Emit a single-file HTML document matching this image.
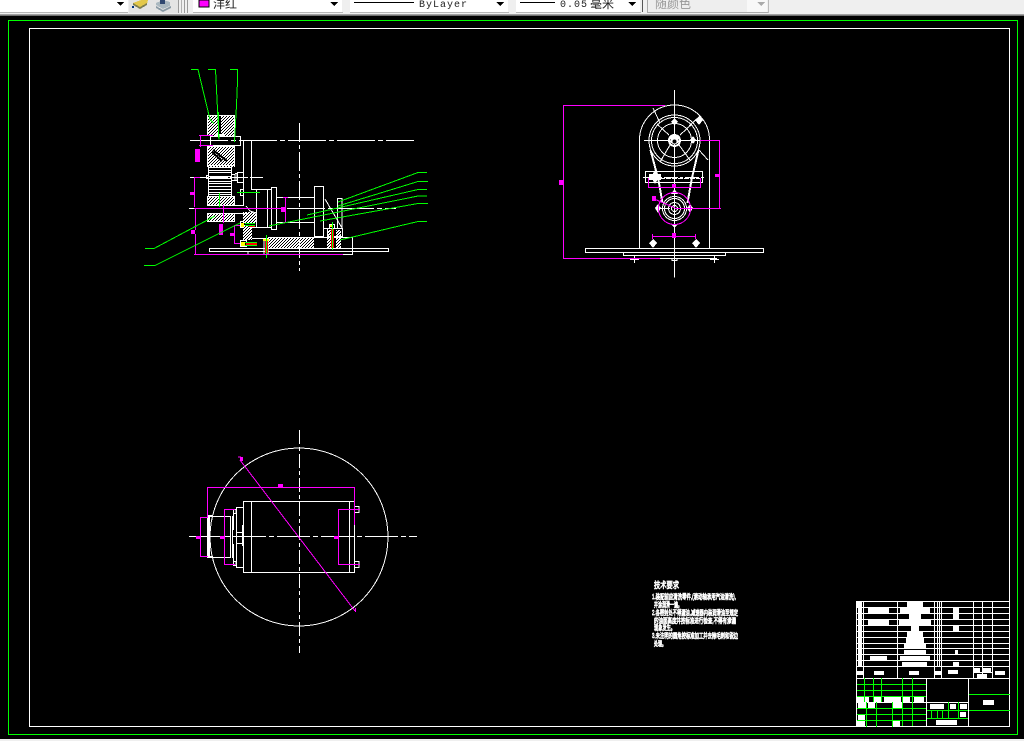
<!DOCTYPE html>
<html lang="zh"><head><meta charset="utf-8"><title>CAD</title>
<style>
html,body{margin:0;padding:0;width:1024px;height:741px;overflow:hidden;background:#000}
svg{position:absolute;left:0;top:0;display:block}
</style></head><body>
<svg width="1024" height="741" viewBox="0 0 1024 741" xmlns="http://www.w3.org/2000/svg" shape-rendering="crispEdges" font-family="'Liberation Sans','Noto Sans CJK SC',sans-serif">
<defs>
<pattern id="h" width="3" height="3" patternUnits="userSpaceOnUse"><rect width="3" height="3" fill="#fff"/><rect x="0" y="0" width="1" height="1" fill="#000"/><rect x="2" y="1" width="1" height="1" fill="#000"/><rect x="1" y="2" width="1" height="1" fill="#000"/></pattern>
</defs>
<rect width="1024" height="741" fill="#000"/>
<!-- toolbar -->
<rect width="1024" height="15" fill="#efefef"/>
<rect y="14" width="1024" height="1" fill="#a0a0a0"/><rect y="15" width="1024" height="1" fill="#707070"/>
<rect width="128" height="12" fill="#fff"/><rect x="0" y="12" width="128" height="1" fill="#b5b5b5"/>
<polygon points="117,2 124,2 120.5,6" fill="#000"/>
<rect x="129" y="0" width="50" height="13" fill="#e4e4e4"/>
<polygon points="133,3 141,0 148,0 147,4 140,8" fill="#e3c84a"/><polygon points="133,5 140,9 147,5 147,3 140,7 133,3" fill="#7d7d50"/><rect x="132" y="6" width="2" height="2" fill="#003080"/>
<polygon points="156,3 163,0 170,2 170,6 163,9 156,5" fill="#aab8c0"/><polygon points="156,6 163,10 171,6 171,8 163,12 156,8" fill="#8899a4"/><rect x="160" y="0" width="5" height="4" fill="#304870"/>
<rect x="178" y="0" width="1" height="13" fill="#9a9a9a"/><rect x="181" y="0" width="1" height="13" fill="#b0b0b0"/><rect x="184" y="0" width="1" height="13" fill="#9a9a9a"/><rect x="187" y="0" width="1" height="13" fill="#9a9a9a"/>
<rect x="193" y="0" width="149" height="12" fill="#fff"/><rect x="193" y="12" width="150" height="1" fill="#b5b5b5"/>
<rect x="199" y="0" width="10" height="7" fill="#ff00ff" stroke="#000" stroke-width="1"/>
<text x="213" y="8" font-size="12" fill="#222" shape-rendering="auto">洋红</text>
<polygon points="330,2 338,2 334,6" fill="#000"/>
<rect x="350" y="0" width="158" height="12" fill="#fff"/><rect x="350" y="12" width="159" height="1" fill="#b5b5b5"/>
<rect x="354" y="2" width="60" height="1" fill="#000"/>
<text x="419" y="7" font-size="10" letter-spacing="1" font-family="'Liberation Mono',monospace" fill="#222" shape-rendering="auto">ByLayer</text>
<polygon points="496,2 504,2 500,6" fill="#000"/>
<rect x="516" y="0" width="124" height="12" fill="#fff"/><rect x="516" y="12" width="125" height="1" fill="#b5b5b5"/>
<rect x="520" y="2" width="35" height="1" fill="#000"/>
<text x="560" y="7" font-size="10" letter-spacing="1" font-family="'Liberation Mono',monospace" fill="#222" shape-rendering="auto">0.05</text>
<text x="590" y="8" font-size="12" fill="#222" shape-rendering="auto">毫米</text>
<polygon points="628,2 636,2 632,6" fill="#000"/>
<rect x="642" y="0" width="1" height="12" fill="#555"/>
<rect x="647" y="0" width="110" height="12" fill="#eee"/><rect x="647" y="0" width="1" height="13" fill="#aaa"/><rect x="647" y="12" width="122" height="1" fill="#aaa"/><rect x="768" y="0" width="1" height="13" fill="#bbb"/><rect x="747" y="0" width="20" height="12" fill="#f8f8f8"/>
<text x="655" y="8" font-size="12" fill="#999" shape-rendering="auto">随颜色</text>
<polygon points="757,2 765,2 761,6" fill="#aaa"/>
<rect y="739" width="1024" height="2" fill="#efefef"/>
<!-- frames -->
<g fill="none" stroke-width="1">
<rect x="8.5" y="20.5" width="1009" height="714" stroke="#00ff00"/>
<rect x="29.5" y="28.5" width="980" height="698" stroke="#fff"/>
</g>

<!-- LEFT VIEW -->
<rect x="207" y="115" width="28" height="21" fill="#fff"/>
<rect x="207" y="146" width="28" height="21" fill="#fff"/>
<rect x="207" y="196" width="28" height="10" fill="#fff"/>
<rect x="207" y="213" width="28" height="9" fill="#fff"/>
<rect x="208" y="116" width="26" height="20" fill="url(#h)"/>
<rect x="208" y="147" width="26" height="20" fill="url(#h)"/>
<rect x="208" y="197" width="26" height="8" fill="url(#h)"/>
<rect x="208" y="214" width="26" height="7" fill="url(#h)"/>
<rect x="219" y="116" width="2" height="19" fill="#000"/>
<path d="M213 150l14 11M212 152l10 9" stroke="#000" stroke-width="2" fill="none"/>
<rect x="216" y="134" width="9" height="3" fill="#fff"/>
<rect x="243" y="212" width="13" height="11" fill="url(#h)"/>
<rect x="243" y="225" width="9" height="15" fill="url(#h)"/>
<rect x="268" y="238" width="32" height="10" fill="url(#h)"/>
<rect x="300" y="238" width="14" height="10" fill="url(#h)"/>
<rect x="327" y="230" width="6" height="18" fill="url(#h)"/>
<rect x="336" y="230" width="5" height="18" fill="url(#h)"/>
<g fill="none" stroke="#fff" stroke-width="1">
<path d="M190 140.500H414" stroke-dasharray="38 3 5 3"/>
<path d="M190 177.500H263" stroke-dasharray="18 2"/>
<path d="M189 208.500H396" stroke-dasharray="38 3 5 3"/>
<path d="M299.500 123V271" stroke-dasharray="19 3 4 3"/>
<rect x="208.500" y="165.500" width="23" height="31"/>
<path d="M208 167.500H232M208 170.500H232M208 172.500H232M208 176.500H232M208 178.500H232M208 181.500H232M208 183.500H232M208 186.500H232M208 189.500H232M208 192.500H232M208 194.500H232"/>
<rect x="206.500" y="175.500" width="2" height="3"/>
<path d="M232 174.500h3v6h-3M235 173.500h2v7h-2"/>
<rect x="237.500" y="172.500" width="6" height="10"/>
<rect x="210.500" y="136.500" width="30" height="9"/>
<path d="M243.500 141V206M251.500 141V189M251 189.500H271M256.500 190V227M267.500 190V227M248 227.500H271"/>
<rect x="240.500" y="189.500" width="3" height="6"/>
<path d="M217 205.500H244M224 213.500H247M246 206l4 5 6 2"/>
<rect x="240.500" y="221.500" width="3" height="6"/>
<rect x="240.500" y="240.500" width="6" height="6"/>
<rect x="271.500" y="187.500" width="5" height="42"/>
<path d="M277 197.500H314M277 222.500H314"/>
<rect x="314.500" y="186.500" width="9" height="50"/>
<path d="M324 228.500H343M337.500 198v30M337 198.500h5v30M325 199l17 29"/>
<rect x="329.500" y="224.500" width="5" height="4"/>
<rect x="327.500" y="228.500" width="15" height="8"/>
<path d="M252 238.500H268M268 237.500H352M352.500 237V254"/>
<rect x="209.500" y="248.500" width="179" height="3"/>
<path d="M343 254.500H353M248 252v3"/>
<path d="M264 240V254M268 240V254"/>
</g>
<rect x="263" y="239" width="6" height="2" fill="#ffff00"/>
<rect x="241" y="223" width="3" height="4" fill="#ffff00"/>
<rect x="241" y="242" width="4" height="4" fill="#ffff00"/>
<rect x="330" y="225" width="3" height="2" fill="#ffff00"/>
<g fill="none" stroke-width="1">
<path d="M245 223.500h10M245 225.500h10M245 242.500h12M245 245.500h12M266.500 235V258M332.500 222V250" stroke="#00ff00"/>
<path d="M249 226.500h6M246 243.500h11M246 244.500h11M265.500 241V253M267.500 241V253M331.500 229V248M333.500 229V248" stroke="#ff0000"/>
</g>
<!-- magenta left -->
<g fill="none" stroke="#ff00ff" stroke-width="1">
<path d="M199 135.500h14M200.500 135V147M199 145.500h14"/>
<path d="M194 177.500h6M194.500 178V207M195.500 208V230M195.500 234V254"/>
<path d="M194 254.500H343"/>
<path d="M194 208.500H286"/>
<path d="M285.500 197V222M283 197.500h5M283 222.500h5"/>
<path d="M223.500 205V223"/>
<path d="M234.500 225V243M234 225.500h6M234 243.500h6"/>
</g>
<g fill="#ff00ff">
<rect x="195" y="149" width="5" height="13"/>
<rect x="190" y="192" width="4" height="3"/>
<rect x="191" y="230" width="4" height="4"/>
<rect x="219" y="224" width="4" height="11"/>
<rect x="230" y="233" width="4" height="3"/>
<rect x="281" y="207" width="4" height="5"/>
</g>
<!-- green left -->
<g fill="none" stroke="#00ff00" stroke-width="1">
<path d="M191 69.500h7l12 50 4 4"/>
<path d="M208 69.500h7.500l1 20 2.500 50"/>
<path d="M230 69.500h7.500V81l-1 24-2 37"/>
<path d="M218.500 112V138"/>
<path d="M145 248.500h9L215 216"/>
<path d="M144 265.500h11L240 223"/>
<path d="M219.500 193V207"/>
<path d="M237 192.500H260"/>
<path d="M269 226L418 196h9"/>
<path d="M338 202L418 172.500h9"/>
<path d="M338 206L418 181.500h10"/>
<path d="M307 215L418 189.500h9"/>
<path d="M320 221L418 203.500h10"/>
<path d="M340 240L418 221.500h9"/>
</g>

<!-- RIGHT VIEW -->
<g fill="none" stroke="#fff" stroke-width="1">
<path d="M674.500 90V277.500"/>
<path d="M639.500 248V140A35 35 0 0 1 709.500 140V248"/>
<circle cx="674.500" cy="140.500" r="25.500"/>
<circle cx="674.500" cy="140.500" r="23"/>
<circle cx="674.500" cy="140.500" r="17"/>
<circle cx="674.500" cy="140.500" r="6"/>
<circle cx="674.500" cy="140.500" r="5"/>
<path d="M644 140.500h25M680 140.500h23"/>
<path d="M653 108l7 15M657 124l12 11M680 135l12-11M660 162l10-17M690 160l-11-15M699 150l9 10M689 126l11-10"/>
<path d="M650 150l8 30 4 23M651 150l8 30 4 23M699 150l-7 30-4 23M698 150l-7 30-4 23"/>
<rect x="645.500" y="171.500" width="57" height="11"/>
<path d="M648 178.500H702" stroke-dasharray="5 1"/>
<path d="M643 177.500H706" stroke-dasharray="14 2 3 2"/>
<circle cx="674.500" cy="208.500" r="12"/>
<circle cx="674.500" cy="208.500" r="10"/>
<circle cx="674.500" cy="208.500" r="6"/>
<circle cx="674.500" cy="208.500" r="3"/>
<path d="M658 208.500h12M679 208.500h12"/>
<rect x="585.500" y="248.500" width="178" height="4"/>
<path d="M623.500 253v2.500H725.500V253M634.500 256V263M714.500 256V263M630 259.500h9M710 259.500h9M672 258.500h5v2h-5zM660 258.500H717"/>
</g>
<g fill="#fff">
<polygon points="699,116 703,120 699,125 695,120"/>
<polygon points="674.500,118 678,122 674.500,125 671,122"/>
<polygon points="693,136 696,140 693,144 690,140"/>
<polygon points="674.500,134 678,136 679,142 674.500,145 670,142 671,136"/>
<polygon points="655,170 659,177 655,184 651,177"/>
<rect x="649" y="174" width="12" height="6"/>
<polygon points="674.500,189 678,194 671,194"/>
<polygon points="674.500,228 678,224 671,224"/>
<polygon points="658,204 661,208 658,213 655,208"/>
<polygon points="690,204 693,208 690,213 687,208"/>
<polygon points="653,239 657,243 653,248 649,243"/>
<polygon points="696,239 700,243 696,248 692,243"/>
</g>
<circle cx="674.500" cy="141.500" r="2" fill="#000"/>
<g fill="none" stroke="#ff00ff" stroke-width="1">
<path d="M563 105.500H665M563.500 105V258M563 258.500H660"/>
<path d="M700 140.500h20M719.500 141V208M675 208.500h46"/>
<path d="M648.500 178v10M700.500 178v10M648 187.500h53"/>
<circle cx="674.500" cy="208.500" r="16"/>
<path d="M652 198l23 10"/>
<path d="M652.500 234v5M695.500 234v5M652 236.500h44"/>
</g>
<g fill="#ff00ff">
<rect x="559" y="180" width="4" height="5"/>
<rect x="715" y="174" width="4" height="3"/>
<rect x="672" y="184" width="4" height="4"/>
<rect x="652" y="196" width="4" height="5"/>
<rect x="672" y="233" width="4" height="5"/>
</g>

<!-- BOTTOM VIEW -->
<g fill="none" stroke="#fff" stroke-width="1">
<circle cx="299" cy="537" r="89"/>
<path d="M299.500 430V653" stroke-dasharray="14 3 4 3"/>
<path d="M189 536.500H417" stroke-dasharray="33 3 5 3"/>
<rect x="243.500" y="501.500" width="111" height="71"/>
<path d="M251.500 502V572M349.500 502V572"/>
<path d="M355 506.500h4v6h-4M355 561.500h4v6h-4"/>
<path d="M236.500 507V567M236 507.500h7M236 567.500h7M236 532.500h7M236 543.500h7M233 509.500h3v4h-3M233 561.500h3v4h-3"/>
<path d="M233.500 509V530M233.500 544V564M242.500 525V546"/>
<rect x="208.500" y="516.500" width="22" height="41"/>
<path d="M232.500 516V558"/>
<rect x="207" y="516" width="3" height="42" fill="#fff" stroke="none"/>
<rect x="207" y="515" width="6" height="2" fill="#fff" stroke="none"/><rect x="207" y="556" width="6" height="2" fill="#fff" stroke="none"/>
</g>
<g fill="none" stroke="#ff00ff" stroke-width="1">
<path d="M207.500 487V517M207 487.500H355M354.500 487V525"/>
<path d="M240 460l115 151"/>
<path d="M200 517.500h8M200 556.500h8M200.500 517V557"/>
<path d="M224.500 509V564M224 509.500h11M224 564.500h11"/>
<path d="M338.500 509V564M338 509.500h22M338 564.500h22"/>
<path d="M238 457h3M355.500 608v4"/>
</g>
<g fill="#ff00ff">
<rect x="278" y="484" width="5" height="4"/>
<rect x="196" y="536" width="4" height="3"/>
<rect x="220" y="536" width="4" height="3"/>
<rect x="334" y="536" width="4" height="3"/>
<rect x="240" y="457" width="3" height="4"/>
</g>

<!-- TECH TEXT -->
<g fill="#fff" stroke="#fff" stroke-width=".7" shape-rendering="auto">
<text x="654" y="588" font-size="8.500" textLength="25" lengthAdjust="spacingAndGlyphs">技术要求</text>
<text x="652" y="599" font-size="7" textLength="84" lengthAdjust="spacingAndGlyphs">1.装配前应清洗零件,(滚动轴承用汽油清洗),</text>
<text x="654" y="607" font-size="7" textLength="28" lengthAdjust="spacingAndGlyphs">并涂润滑一遍。</text>
<text x="652" y="615" font-size="7" textLength="86" lengthAdjust="spacingAndGlyphs">2.各密封处不得漏油,减速器内装润滑油至规定</text>
<text x="654" y="623" font-size="7" textLength="82" lengthAdjust="spacingAndGlyphs">的油面高度并按标准进行检查,不得有渗漏</text>
<text x="654" y="630" font-size="7" textLength="21" lengthAdjust="spacingAndGlyphs">现象发生。</text>
<text x="652" y="638" font-size="7" textLength="86" lengthAdjust="spacingAndGlyphs">3.未注明的圆角按标准加工并去除毛刺和锐边</text>
<text x="654" y="646" font-size="7" textLength="12" lengthAdjust="spacingAndGlyphs">处理。</text>
</g>

<!-- TITLE TABLE -->
<g fill="none" stroke="#fff" stroke-width="1">
<path d="M856 601.500H1010M856 607.500H1010M856 613.500H1010M856 619.500H1010M856 625.500H1010M856 631.500H1010M856 637.500H1010M856 643.500H1010M856 648.500H1010M856 654.500H1010M856 660.500H1010M856 666.500H1010M856 678.500H1010"/>
<path d="M856.500 601V726M863.500 601V678M897.500 601V678M934.500 601V678M941.500 601V678M973.500 601V678M982.500 601V678M992.500 601V678"/>
<path d="M858.500 601V666M861.500 601V666M937.500 601V666M939.500 601V666M857 672.500h6M935 672.500h6M973 672.500h20"/>
<path d="M926.500 678V726M968.500 678V726M926 702.500H968M856 702.500H926"/>
</g>
<g fill="#fff">
<rect x="857" y="602" width="2" height="5"/><rect x="859" y="602" width="3" height="5"/><rect x="859" y="608" width="3" height="5"/><rect x="859" y="614" width="3" height="5"/><rect x="859" y="620" width="3" height="5"/><rect x="859" y="626" width="3" height="5"/><rect x="859" y="632" width="3" height="5"/><rect x="859" y="638" width="3" height="5"/><rect x="859" y="644" width="3" height="4"/><rect x="859" y="649" width="3" height="5"/><rect x="859" y="655" width="3" height="5"/><rect x="859" y="661" width="3" height="5"/>
<rect x="857" y="671" width="6" height="4"/>
<rect x="868" y="608" width="21" height="5"/><rect x="868" y="620" width="21" height="5"/><rect x="870" y="656" width="17" height="5"/><rect x="874" y="671" width="10" height="4"/>
<rect x="907" y="602" width="16" height="5"/><rect x="900" y="608" width="30" height="5"/><rect x="909" y="614" width="12" height="5"/><rect x="899" y="620" width="32" height="5"/><rect x="911" y="626" width="8" height="5"/><rect x="907" y="632" width="16" height="5"/><rect x="906" y="638" width="18" height="5"/><rect x="904" y="644" width="22" height="4"/><rect x="904" y="650" width="22" height="5"/><rect x="900" y="656" width="30" height="5"/><rect x="902" y="662" width="25" height="5"/><rect x="909" y="671" width="10" height="4"/>
<rect x="935" y="671" width="6" height="4"/>
<rect x="953" y="608" width="6" height="5"/><rect x="953" y="614" width="6" height="5"/><rect x="953" y="626" width="6" height="5"/><rect x="955" y="650" width="3" height="5"/><rect x="953" y="662" width="6" height="5"/><rect x="948" y="670" width="10" height="4"/>
<rect x="974" y="668" width="6" height="4"/><rect x="983" y="668" width="8" height="4"/><rect x="977" y="674" width="10" height="4"/><rect x="995" y="671" width="10" height="4"/>
<rect x="857" y="697" width="12" height="5"/><rect x="874" y="697" width="7" height="5"/><rect x="884" y="697" width="17" height="5"/><rect x="903" y="697" width="7" height="5"/><rect x="914" y="697" width="10" height="5"/>
<rect x="858" y="703" width="8" height="5"/><rect x="868" y="703" width="7" height="5"/><rect x="893" y="703" width="9" height="5"/>
<rect x="858" y="715" width="7" height="5"/><rect x="857" y="721" width="8" height="5"/><rect x="893" y="721" width="7" height="5"/>
<rect x="930" y="704" width="14" height="5"/><rect x="950" y="704" width="6" height="5"/><rect x="960" y="704" width="7" height="5"/><rect x="960" y="712" width="6" height="5"/><rect x="936" y="720" width="21" height="5"/>
<rect x="983" y="700" width="11" height="5"/>
</g>
<g fill="none" stroke="#00ff00" stroke-width="1">
<path d="M857 684.500H926M857 690.500H926M857 696.500H926M857 708.500H926M857 714.500H926M857 720.500H926"/>
<path d="M864.500 678V702M873.500 678V702M881.500 678V702M902.500 678V726M912.500 678V726"/>
<path d="M866.500 702V727M876.500 702V727M892.500 702V727"/>
<path d="M927 710.500H968M927 718.500H968M931.500 711V718M937.500 711V718M942.500 711V718M948.500 702V718M958.500 702V718"/>
<path d="M969 694.500H1010M969 710.500H1010"/>
</g>
</svg>
</body></html>
